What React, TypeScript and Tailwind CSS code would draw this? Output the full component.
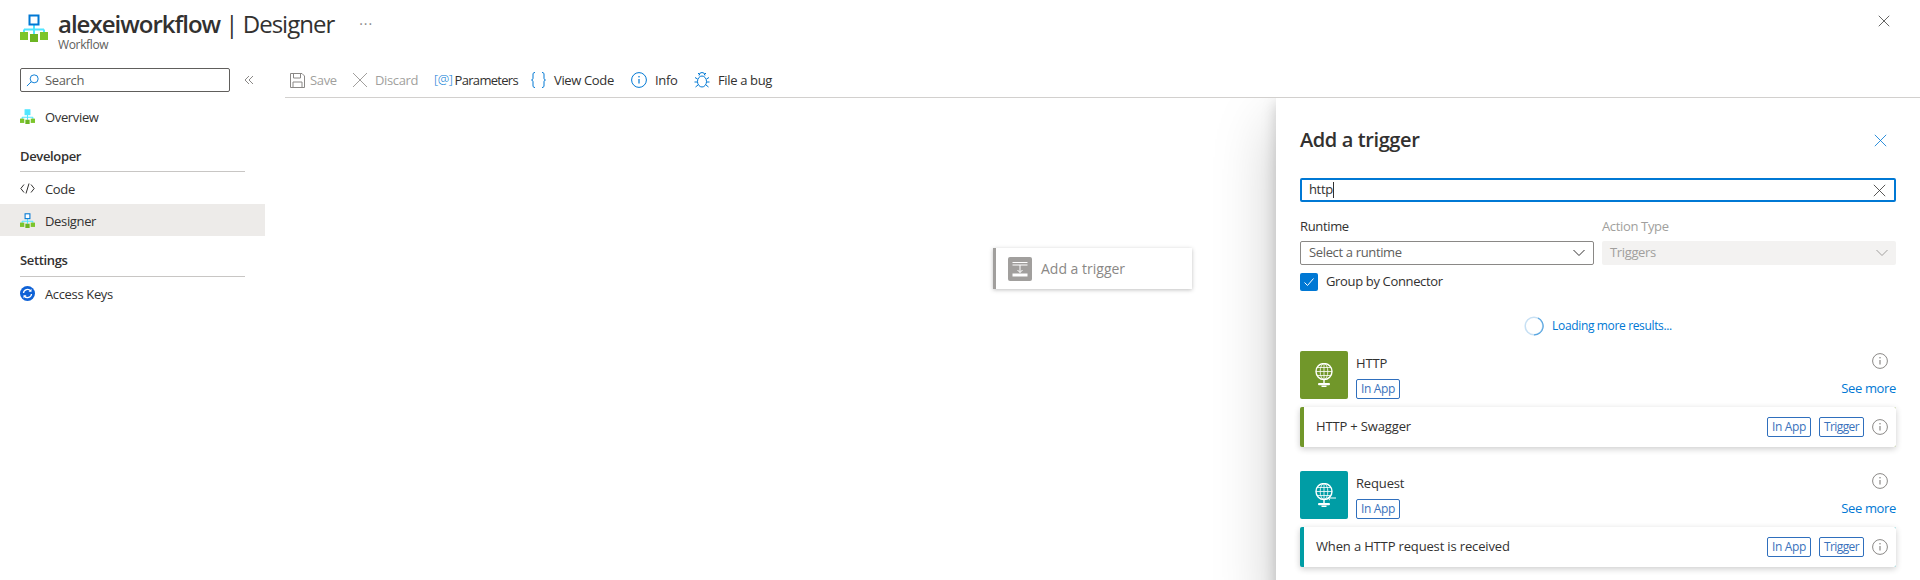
import React from "react";

function WorkflowIcon({ size = 28, top = "#0078d4", fill = false }: { size?: number; top?: string; fill?: boolean }) {
  return (
    <svg width={size} height={size} viewBox="0 0 28 28" className="shrink-0">
      <path d="M14 11v9M4 15.5h20M4 15.5v4M24 15.5v4" stroke="#50e6ff" strokeWidth="2" fill="none" />
      <rect x="9.5" y="1.5" width="9" height="9" fill={fill ? "#50e6ff" : "#fff"} stroke={top} strokeWidth="2" />
      <rect x="0" y="18" width="8" height="8" fill="#7cc52c" />
      <rect x="10" y="20" width="8" height="8" fill="#6cb523" />
      <rect x="20" y="18" width="8" height="8" fill="#7cc52c" />
    </svg>
  );
}

function XIcon({ size, color, sw = 1 }: { size: number; color: string; sw?: number }) {
  return (
    <svg width={size} height={size} viewBox="0 0 16 16" className="shrink-0">
      <path d="M1 1l14 14M15 1L1 15" stroke={color} strokeWidth={sw} fill="none" />
    </svg>
  );
}

function Chevron({ color }: { color: string }) {
  return (
    <svg width="12" height="8" viewBox="0 0 12 8" className="shrink-0">
      <path d="M.5 1L6 6.5 11.5 1" stroke={color} strokeWidth="1" fill="none" />
    </svg>
  );
}

function InfoIcon({ size = 16, color = "#8a8886" }: { size?: number; color?: string }) {
  return (
    <svg width={size} height={size} viewBox="0 0 16 16" className="shrink-0">
      <circle cx="8" cy="8" r="7.4" stroke={color} strokeWidth="1" fill="none" />
      <path d="M8 7v4.5" stroke={color} strokeWidth="1.2" />
      <circle cx="8" cy="4.8" r="0.8" fill={color} />
    </svg>
  );
}

function Globe({ arrow = false }: { arrow?: boolean }) {
  return (
    <svg width="24" height="24" viewBox="0 0 24 24" className="shrink-0">
      <g stroke="#fff" fill="none" strokeWidth="0.8">
        <circle cx="12" cy="8.500" r="8" strokeWidth="1.400" />
        <ellipse cx="12" cy="8.500" rx="3.800" ry="8" />
        <path d="M4 8.500h16M5.200 4.500h13.600M5.200 12.500h13.600M12 .5v16" />
        <path d="M12 16.500v4" strokeWidth="1.400" />
        {arrow && <path d="M24 15h-8M18 12.800L15.800 15l2.200 2.200" strokeWidth="1" />}
      </g>
      <rect x="6" y="20" width="12" height="2.200" rx="1" fill="#fff" />
      <rect x="9.500" y="22.500" width="5" height="1.500" fill="#fff" />
    </svg>
  );
}

function Badge({ children, tight = false }: { children: React.ReactNode; tight?: boolean }) {
  return (
    <span className={`flex h-5 items-center rounded-[2px] border border-[#2f6fbd] px-[4px] text-[12px] leading-none text-[#3a72bc] ${tight ? "tracking-[-0.6px]" : ""}`}>
      {children}
    </span>
  );
}

function NavItem({ icon, label, active = false }: { icon: React.ReactNode; label: string; active?: boolean }) {
  return (
    <div className={`flex h-8 items-center pl-5 ${active ? "bg-[#edebe9]" : ""}`}>
      <span className="flex w-[25px] shrink-0 items-center">{icon}</span>
      <span className="pt-[3px] text-[13px] text-[#323130]">{label}</span>
    </div>
  );
}

function ToolItem({ icon, label, disabled = false, w, gap, tight = false }: { icon: React.ReactNode; label: string; disabled?: boolean; w: string; gap: string; tight?: boolean }) {
  return (
    <div className={`flex items-center ${w} ${gap}`}>
      {icon}
      <span className={`pt-[2px] text-[13px] ${tight ? "tracking-[-0.7px]" : ""} ${disabled ? "text-[#a19f9d]" : "text-[#323130]"}`}>{label}</span>
    </div>
  );
}

function Group({ color, name, action, arrow }: { color: string; name: string; action: string; arrow?: boolean }) {
  return (
    <div>
      <div className="flex h-12">
        <div className={`flex h-12 w-12 items-center justify-center rounded-[2px] ${color}`}>
          <Globe arrow={arrow} />
        </div>
        <div className="ml-2 flex flex-col items-start justify-between">
          <span className="mt-[2px] text-[13px] font-medium leading-[20px] tracking-[-0.15px] text-[#323130]">{name}</span>
          <Badge>In App</Badge>
        </div>
        <div className="ml-auto flex flex-col items-end justify-between">
          <span className="mt-[2px] mr-[8px]"><InfoIcon /></span>
          <span className="mb-0.5 text-[13px] leading-[18px] text-[#0078d4]">See more</span>
        </div>
      </div>
      <div className={`mt-2 flex h-10 items-center rounded-[2px] ${color} pl-1 shadow-[0_2px_6px_rgba(0,0,0,0.2)]`}>
        <div className="flex h-full flex-1 items-center rounded-r-[2px] bg-white pl-3 pr-2">
          <span className="text-[13px] font-medium tracking-[-0.15px] text-[#323130]">{action}</span>
          <div className="ml-auto flex items-center gap-2">
            <Badge>In App</Badge>
            <Badge tight>Trigger</Badge>
            <InfoIcon />
          </div>
        </div>
      </div>
    </div>
  );
}

export default function App() {
  return (
    <div className="relative flex h-[580px] w-[1920px] flex-col overflow-hidden bg-white tracking-[-0.35px] text-[#323130] [font-family:'Open_Sans','Noto_Sans',sans-serif]">
      <header className="flex h-[63px] shrink-0 items-start pl-5 pr-[30px] pt-[14px]">
        <WorkflowIcon />
        <div className="ml-[10px] mt-[-4px]">
          <div className="text-[24px] leading-[28px] tracking-[-1px] text-[#323130]">
            <span className="font-semibold">alexeiworkflow</span> | Designer
          </div>
          <div className="text-[12px] leading-[14px] text-[#605e5c]">Workflow</div>
        </div>
        <span className="ml-[25px] mt-[-6px] text-[14px] leading-[32px] tracking-[1px] text-[#8a8886]">···</span>
        <span className="ml-auto mt-[1px]"><XIcon size={12} color="#323130" /></span>
      </header>

      <div className="flex flex-1">
        <aside className="w-[265px] shrink-0 pt-[5px]">
          <div className="flex items-center pl-5">
            <div className="flex h-6 w-[210px] items-center rounded-[2px] border border-[#605e5c] pl-[5px]">
              <svg width="13" height="13" viewBox="0 0 14 14" className="shrink-0">
                <circle cx="8.800" cy="5.200" r="4.300" stroke="#0078d4" fill="none" />
                <path d="M5.600 8.400L1 13" stroke="#0078d4" fill="none" />
              </svg>
              <span className="ml-[6px] pt-[2px] text-[13px] text-[#605e5c]">Search</span>
            </div>
            <svg width="10" height="10" viewBox="0 0 10 10" className="ml-[14px]">
              <path d="M5 1L1 5l4 4M9 1L5 5l4 4" stroke="#8a8886" fill="none" />
            </svg>
          </div>
          <div className="mt-2">
            <NavItem icon={<WorkflowIcon size={15} top="#50e6ff" fill />} label="Overview" />
          </div>
          <div className="mx-5 mt-[14px] border-b border-[#c8c6c4] pb-[5px] text-[13px] font-semibold leading-[20px]">Developer</div>
          <div>
            <NavItem
              icon={
                <svg width="15" height="11" viewBox="0 0 15 11">
                  <path d="M4 1.500L.8 5.500 4 9.500M11 1.500l3.200 4-3.200 4M9 .5L6 10.500" stroke="#323130" fill="none" />
                </svg>
              }
              label="Code"
            />
            <NavItem icon={<WorkflowIcon size={15} />} label="Designer" active />
          </div>
          <div className="mx-5 mt-[14px] border-b border-[#c8c6c4] pb-[6px] text-[13px] font-semibold leading-[20px]">Settings</div>
          <div>
            <NavItem
              icon={
                <svg width="15" height="15" viewBox="0 0 15 15">
                  <circle cx="7.500" cy="7.500" r="7.500" fill="#0f62d6" />
                  <path d="M3.500 7A4 4 0 0 1 10.700 5M11.500 8A4 4 0 0 1 4.300 10" stroke="#fff" strokeWidth="1.300" fill="none" />
                  <path d="M11.500 2.800v3h-3zM3.500 12.200v-3h3z" fill="#fff" />
                </svg>
              }
              label="Access Keys"
            />
          </div>
        </aside>

        <main className="flex-1 pl-5">
          <div className="flex h-[35px] items-center border-b border-[#d2d0ce] pl-[5px]">
            <ToolItem
              w="w-[62px]"
              gap="gap-[5px]"
              disabled
              label="Save"
              icon={
                <svg width="15" height="15" viewBox="0 0 15 15" className="shrink-0">
                  <path d="M.5.500h11.500l2.500 2.500v11.500H.5z" stroke="#8a8886" fill="none" />
                  <path d="M3.500 1v4h7V1M3 14.500V9h9v5.500" stroke="#8a8886" fill="none" />
                </svg>
              }
            />
            <ToolItem w="w-[82px]" gap="gap-[7px]" disabled label="Discard" icon={<XIcon size={16} color="#a19f9d" />} />
            <ToolItem
              w="w-[97px]"
              gap="gap-[2px]"
              tight
              label="Parameters"
              icon={<span className="text-[13px] font-light tracking-[-0.4px] text-[#0078d4]">[@]</span>}
            />
            <ToolItem
              w="w-[100px]"
              gap="gap-[8px]"
              label="View Code"
              icon={
                <svg width="15" height="16" viewBox="0 0 15 16" className="shrink-0">
                  <path d="M4 .5C2 .5 2 1.500 2 3v3c0 1.200-.5 2-1.500 2C1.500 8 2 8.800 2 10v3c0 1.500 0 2.500 2 2.500M11 .5c2 0 2 1 2 2.500v3c0 1.200.5 2 1.500 2-1 0-1.500.8-1.500 2v3c0 1.500 0 2.500-2 2.500" stroke="#0078d4" fill="none" />
                </svg>
              }
            />
            <ToolItem w="w-[63px]" gap="gap-[8px]" label="Info" icon={<InfoIcon color="#0078d4" />} />
            <ToolItem
              w="w-[90px]"
              gap="gap-[8px]"
              label="File a bug"
              icon={
                <svg width="16" height="16" viewBox="0 0 16 16" className="shrink-0">
                  <g stroke="#0078d4" fill="none">
                    <ellipse cx="8" cy="9.500" rx="4.500" ry="5.500" />
                    <path d="M5 3.500a3 3 0 0 1 6 0M4 1l2 2M12 1l-2 2M3.500 7L1 5.500M12.500 7L15 5.500M3.500 10H.5M12.500 10h3M4 13l-2.500 2M12 13l2.500 2" />
                  </g>
                </svg>
              }
            />
          </div>
          <div className="pl-[708px] pt-[150px]">
            <div className="flex h-[41px] w-[199px] items-center border-l-[3px] border-[#a19f9d] bg-white pl-3 shadow-[0_1px_4px_rgba(0,0,0,0.25)]">
              <div className="flex h-6 w-6 items-center justify-center rounded-[2px] bg-[#a19f9d]">
                <svg width="24" height="24" viewBox="0 0 24 24">
                  <path d="M4.500 5.500h15M4.500 8h15M12 8v7.500M9.500 13l2.500 2.500 2.500-2.500" stroke="#fff" fill="none" />
                  <rect x="4.500" y="16.500" width="15" height="3" fill="#fff" />
                </svg>
              </div>
              <span className="ml-[9px] text-[14px] font-medium tracking-[0px] text-[#8a8886]">Add a trigger</span>
            </div>
          </div>
        </main>
      </div>

      <div className="absolute bottom-0 left-[1176px] right-0 top-[98px] flex justify-end overflow-hidden">
        <section className="h-[500px] w-[644px] bg-white pl-6 pr-6 pt-[28px] shadow-[0_25px_58px_rgba(0,0,0,0.22),0_5px_14px_rgba(0,0,0,0.18)]">
          <div className="flex h-7 items-center justify-between pr-[9px]">
            <h2 className="text-[20px] font-semibold leading-7 tracking-[-0.4px] text-[#323130]">Add a trigger</h2>
            <XIcon size={13} color="#0078d4" />
          </div>
          <div className="mt-[24px] flex h-6 items-center rounded-[2px] border-2 border-[#0078d4] pl-[7px] pr-[8px]">
            <span className="text-[13px] text-[#323130]">http</span>
            <span className="h-[16px] w-px bg-[#323130]" />
            <span className="ml-auto"><XIcon size={13} color="#323130" /></span>
          </div>
          <div className="mt-[14px] flex gap-2">
            <div className="flex-1">
              <div className="text-[13px] font-normal leading-5">Runtime</div>
              <div className="mt-[5px] flex h-6 items-center justify-between rounded-[2px] border border-[#8a8886] pl-2 pr-[8px]">
                <span className="text-[13px] text-[#605e5c]">Select a runtime</span>
                <Chevron color="#323130" />
              </div>
            </div>
            <div className="flex-1">
              <div className="text-[13px] leading-5 text-[#a19f9d]">Action Type</div>
              <div className="mt-[5px] flex h-6 items-center justify-between rounded-[2px] bg-[#f3f2f1] pl-2 pr-[8px]">
                <span className="text-[13px] text-[#a19f9d]">Triggers</span>
                <Chevron color="#a19f9d" />
              </div>
            </div>
          </div>
          <div className="mt-[7px] flex items-center gap-2">
            <div className="flex h-[18px] w-[18px] items-center justify-center rounded-[2px] bg-[#0078d4]">
              <svg width="12" height="12" viewBox="0 0 12 12">
                <path d="M1.500 6.500l3 3 6-7" stroke="#fff" fill="none" />
              </svg>
            </div>
            <span className="text-[13px] text-[#323130]">Group by Connector</span>
          </div>
          <div className="mt-[24px] flex h-5 items-center justify-center gap-[8px]">
            <svg width="20" height="20" viewBox="0 0 20 20">
              <circle cx="10" cy="10" r="8.800" stroke="#c7e0f4" strokeWidth="1.500" fill="none" />
              <path d="M14 2A8.800 8.800 0 0 1 10 18.800" stroke="#5aa6e0" strokeWidth="1.200" fill="none" />
            </svg>
            <span className="text-[12px] text-[#0078d4]">Loading more results...</span>
          </div>
          <div className="mt-[15px] flex flex-col gap-6">
            <Group color="bg-[#71972a]" name="HTTP" action="HTTP + Swagger" />
            <Group color="bg-[#009da5]" name="Request" action="When a HTTP request is received" arrow />
          </div>
        </section>
      </div>
    </div>
  );
}
